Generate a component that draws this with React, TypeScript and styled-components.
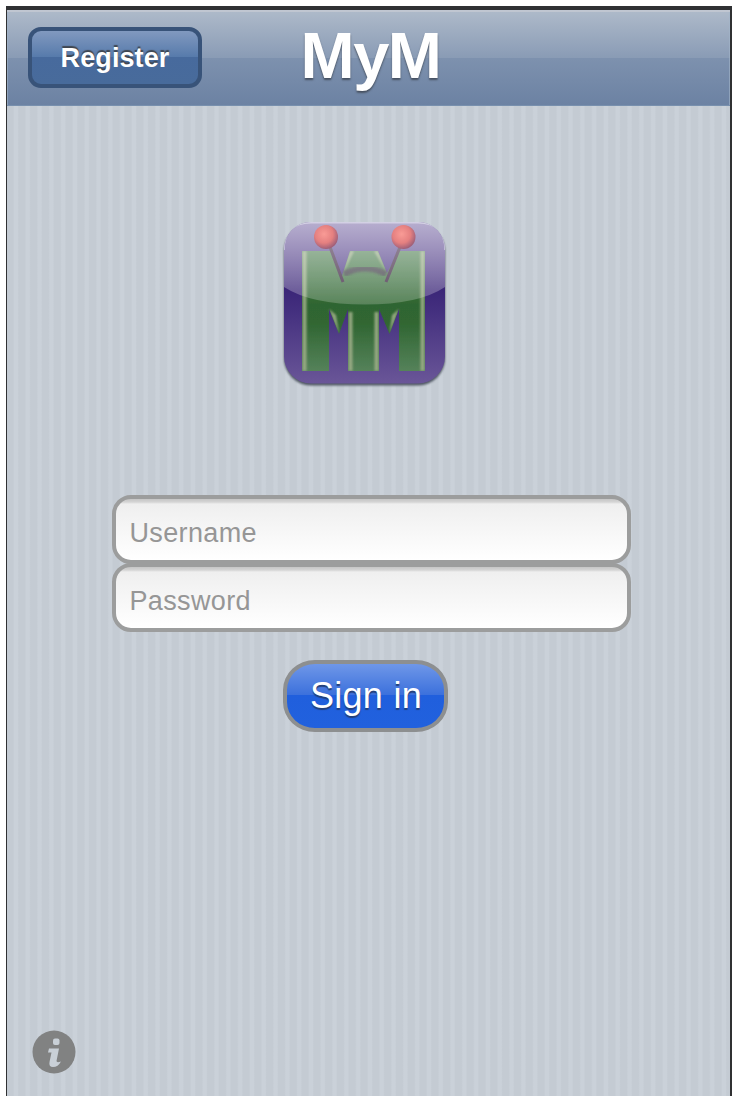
import React from "react";
import styled, { createGlobalStyle } from "styled-components";

const Global = createGlobalStyle`
  * { box-sizing: border-box; }
  html, body { margin: 0; background: #fff; }
  body { font-family: "Liberation Sans", Arial, sans-serif; }
`;

const Page = styled.div`
  height: 1104px;
  padding: 6px 6px 8px;
  overflow: hidden;
`;

const Screen = styled.main`
  display: flex;
  flex-direction: column;
  align-items: stretch;
  height: 1090px;
  border: solid #303133;
  border-width: 4px 2px 0 1px;
  background: repeating-linear-gradient(90deg, #c4cbd3 0, #c4cbd3 6px, #cad1d9 7.5px, #cad1d9 10.5px, #c4cbd3 11.8px);
`;

const NavBar = styled.header`
  display: grid;
  grid-template-columns: 1fr auto 1fr;
  align-items: center;
  height: 96px;
  padding: 0 21px;
  border-top: 2px solid #c0c6d1;
  border-bottom: 1px solid #7890ae;
  background: linear-gradient(#adb9c9 0, #899bb5 50%, #7d91ae 50%, #6c82a3 100%);
  box-shadow: inset 1px 0 #a3b5ca99, inset -1px 0 #a3b5ca99;
`;

const RegisterButton = styled.button`
  justify-self: start;
  width: 174px;
  height: 61px;
  margin-top: -2px;
  padding: 2px 0 0;
  border: 4px solid #385379;
  border-radius: 13px;
  background: linear-gradient(#8199bf 0, #567aab 50%, #476a9d 50%, #486b9b 100%);
  color: #fff;
  font: bold 27px "Liberation Sans", Arial, sans-serif;
  letter-spacing: 0.1px;
  text-shadow: 0 -2px 1px #3f4650;
`;

const Title = styled.h1`
  margin: -6px 0 0 4px;
  color: #fff;
  font-size: 65px;
  line-height: 92px;
  letter-spacing: -1.5px;
  text-shadow: 0 2px 2px #46505f;
`;

const Body = styled.section`
  display: flex;
  flex: 1;
  flex-direction: column;
  align-items: center;
  padding-top: 104px;
`;

const Logo = styled.svg`
  display: block;
  flex: none;
  width: 190px;
  height: 190px;
  margin-left: -7px;
`;

const Form = styled.form`
  display: flex;
  flex-direction: column;
  align-items: center;
  width: 519px;
  margin: 95px 0 0 5px;
`;

const Field = styled.input`
  width: 519px;
  height: 69px;
  margin: 0 0 -1px;
  padding: 7px 14px 0;
  border: 4px solid #9c9d9d;
  border-radius: 19px;
  outline: 0;
  background: linear-gradient(#c6c6c6 0, #d4d4d4 3px, #efefef 5px, #fff 100%);
  font: 27px "Liberation Sans", Arial, sans-serif;
  letter-spacing: 0.35px;
  &::placeholder { color: #969696; opacity: 1; }
`;

const SignIn = styled.button`
  width: 165px;
  height: 72px;
  margin: 29px 0 0 -12px;
  padding: 0 0 1px 2px;
  border: 4px solid #8d8f90;
  border-radius: 32px / 30px;
  background: linear-gradient(#6f97e8 0, #3b70dc 49%, #205fdd 49%, #2161de 100%);
  color: #fff;
  font: 36px "Liberation Sans", Arial, sans-serif;
  letter-spacing: 0.3px;
  text-shadow: 0 2px 1px #233f78;
`;

const InfoButton = styled.button`
  align-self: flex-start;
  width: 44px;
  height: 44px;
  margin: auto 0 22px 25px;
  padding: 0;
  border: 0;
  background: none;
  svg { display: block; }
`;

const M_SHAPE =
  "M32 41H60L72 66L80 41H108L117 63L129 41H155V161H129V99L119.500 124L109 99V161H78V99L69 124L59 99V161H32Z";

const AppLogo = () => (
  <Logo viewBox="0 0 190 190" role="img" aria-label="MyM">
    <defs>
      <linearGradient id="tile" x1="0" y1="0" x2="0" y2="1">
        <stop offset="0" stopColor="#5f4b94" />
        <stop offset=".42" stopColor="#3b2678" />
        <stop offset=".55" stopColor="#44307f" />
        <stop offset="1" stopColor="#6a5698" />
      </linearGradient>
      <linearGradient id="leaf" x1="0" y1="0" x2="0" y2="1">
        <stop offset="0" stopColor="#487b4c" />
        <stop offset=".45" stopColor="#2f6531" />
        <stop offset=".6" stopColor="#306632" />
        <stop offset="1" stopColor="#55825a" />
      </linearGradient>
      <linearGradient id="gloss" x1="0" y1="0" x2="0" y2="1">
        <stop offset="0" stopColor="#fff" stopOpacity=".55" />
        <stop offset="1" stopColor="#fff" stopOpacity=".2" />
      </linearGradient>
      <radialGradient id="ball" cx=".42" cy=".38" r=".62">
        <stop offset="0" stopColor="#f99b96" />
        <stop offset=".6" stopColor="#e58080" />
        <stop offset="1" stopColor="#a06078" />
      </radialGradient>
      <clipPath id="clip"><rect x="14" y="12" width="161" height="161.5" rx="27" /></clipPath>
      <clipPath id="leafClip"><path d={M_SHAPE} /></clipPath>
      <filter id="soft" x="-20%" y="-20%" width="140%" height="140%"><feGaussianBlur stdDeviation="1.2" /></filter>
      <filter id="slight"><feGaussianBlur stdDeviation=".6" /></filter>
    </defs>
    <rect x="14" y="14.5" width="161" height="161" rx="27" fill="#4f5663" filter="url(#soft)" />
    <g clipPath="url(#clip)">
      <rect x="14" y="12" width="161" height="162" fill="url(#tile)" />
      <g filter="url(#slight)">
        <path d={M_SHAPE} fill="url(#leaf)" />
        <g clipPath="url(#leafClip)">
          <g filter="url(#soft)" fill="#9eae88" opacity=".9">
            <path d="M32.500 41H36.500V161H32.500ZM150.500 41H154.500V161H150.500ZM78.500 102H82.500V161H78.500ZM104.500 102H108.500V161H104.500Z" />
            <path d="M59 99L69 124L66 105ZM129 99L119.500 124L122 105ZM80 41L72 66L84 41ZM108 41L117 63L104 41Z" />
          </g>
        </g>
        <path d="M74 64Q95 53 116 64" fill="none" stroke="#33213a" strokeWidth="6" opacity=".75" filter="url(#soft)" />
        <path d="M60 37L73 72M130 37L116 72" fill="none" stroke="#341c3a" strokeWidth="3" />
      </g>
      <path d="M14 12H175V77Q149 94.5 95 94.5T14 77Z" fill="url(#gloss)" />
      <circle cx="56" cy="27" r="12" fill="url(#ball)" filter="url(#slight)" />
      <circle cx="133.5" cy="27" r="12" fill="url(#ball)" filter="url(#slight)" />
      <path d="M14 40Q14 12.700 41 12.700H148Q175 12.700 175 40" fill="none" stroke="#e4e3f0" strokeWidth="1.5" opacity=".65" />
    </g>
  </Logo>
);

const App = () => (
  <>
    <Global />
    <Page>
      <Screen>
        <NavBar>
          <RegisterButton>Register</RegisterButton>
          <Title>MyM</Title>
        </NavBar>
        <Body>
          <AppLogo />
          <Form onSubmit={(e) => e.preventDefault()}>
            <Field placeholder="Username" aria-label="Username" />
            <Field type="password" placeholder="Password" aria-label="Password" />
            <SignIn>Sign in</SignIn>
          </Form>
          <InfoButton aria-label="Information">
            <svg width="44" height="44" viewBox="0 0 44 44">
              <circle cx="22" cy="22" r="21.5" fill="#818282" />
              <rect x="21" y="8.5" width="6.5" height="6.5" rx="2" fill="#c9d0d7" />
              <path d="M17 18.5H27L24.5 31Q24.5 33 29 31.5Q26 37 21 37Q16.500 37 17.500 32L19.500 22.500H16Z" fill="#c9d0d7" />
            </svg>
          </InfoButton>
        </Body>
      </Screen>
    </Page>
  </>
);

export default App;
